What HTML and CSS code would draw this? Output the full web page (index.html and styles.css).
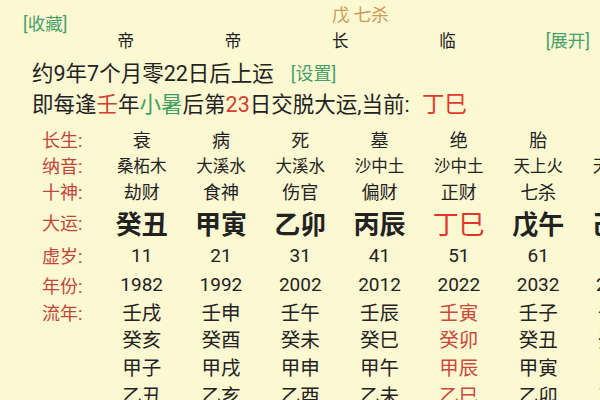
FILE: index.html
```html
<!DOCTYPE html>
<html lang="zh-CN">
<head>
<meta charset="utf-8">
<link rel="stylesheet" href="styles.css">
</head>
<body>
<div class="page">
  <div class="head">
    <span class="link fav">[收藏]</span>
    <div class="pillars">
      <div class="ss">戊 七杀</div>
      <div class="row4"><span>帝</span><span>帝</span><span>长</span><span>临</span></div>
    </div>
    <span class="link expand">[展开]</span>
  </div>
  <div class="line l1">约9年7个月零22日后上运<span class="link set">[设置]</span></div>
  <div class="line l2">即每逢<span class="red">壬</span>年<span class="green">小暑</span>后第<span class="red">23</span>日交脱大运,当前: <span class="cur">丁巳</span></div>

  <div class="table">
    <span class="lbl">长生:</span>
    <span class="v cs">衰</span><span class="v cs">病</span><span class="v cs">死</span><span class="v cs">墓</span><span class="v cs">绝</span><span class="v cs">胎</span><span class="v cs">养</span>

    <span class="lbl">纳音:</span>
    <span class="v ny">桑柘木</span><span class="v ny">大溪水</span><span class="v ny">大溪水</span><span class="v ny">沙中土</span><span class="v ny">沙中土</span><span class="v ny">天上火</span><span class="v ny">天上火</span>

    <span class="lbl">十神:</span>
    <span class="v ss2">劫财</span><span class="v ss2">食神</span><span class="v ss2">伤官</span><span class="v ss2">偏财</span><span class="v ss2">正财</span><span class="v ss2">七杀</span><span class="v ss2">正官</span>

    <span class="lbl">大运:</span>
    <span class="v dy">癸丑</span><span class="v dy">甲寅</span><span class="v dy">乙卯</span><span class="v dy">丙辰</span><span class="v dy now">丁巳</span><span class="v dy">戊午</span><span class="v dy">己未</span>

    <span class="lbl">虚岁:</span>
    <span class="v num">11</span><span class="v num">21</span><span class="v num">31</span><span class="v num">41</span><span class="v num">51</span><span class="v num">61</span><span class="v num">71</span>

    <span class="lbl">年份:</span>
    <span class="v num">1982</span><span class="v num">1992</span><span class="v num">2002</span><span class="v num">2012</span><span class="v num">2022</span><span class="v num">2032</span><span class="v num">2042</span>

    <span class="lbl">流年:</span>
    <span class="v ln">壬戌</span><span class="v ln">壬申</span><span class="v ln">壬午</span><span class="v ln">壬辰</span><span class="v ln hl">壬寅</span><span class="v ln">壬子</span><span class="v ln">壬戌</span>

    <span class="lbl"></span>
    <span class="v ln">癸亥</span><span class="v ln">癸酉</span><span class="v ln">癸未</span><span class="v ln">癸巳</span><span class="v ln hl">癸卯</span><span class="v ln">癸丑</span><span class="v ln">癸亥</span>

    <span class="lbl"></span>
    <span class="v ln">甲子</span><span class="v ln">甲戌</span><span class="v ln">甲申</span><span class="v ln">甲午</span><span class="v ln hl">甲辰</span><span class="v ln">甲寅</span><span class="v ln">甲子</span>

    <span class="lbl"></span>
    <span class="v ln">乙丑</span><span class="v ln">乙亥</span><span class="v ln">乙酉</span><span class="v ln">乙未</span><span class="v ln hl">乙巳</span><span class="v ln">乙卯</span><span class="v ln">乙丑</span>
  </div>
</div>
</body>
</html>
```

FILE: styles.css
```css
html, body {
  margin: 0;
  padding: 0;
  background: #fcf8d2;
  width: 600px;
  height: 400px;
  overflow: hidden;
}

.page {
  font-family: Roboto, "Noto Sans CJK SC", sans-serif;
  color: #222;
  width: 600px;
  height: 400px;
  overflow: hidden;
}

.link {
  color: #46a06b;
  font-size: 17.5px;
  line-height: 22px;
}

.head {
  display: grid;
  grid-template-columns: 72px 1fr auto;
  height: 56px;
}

.fav {
  padding-left: 23px;
  margin-top: 13px;
  align-self: start;
  white-space: nowrap;
}

.ss {
  color: #c99b58;
  font-size: 17.5px;
  line-height: 20px;
  padding-top: 5px;
  padding-left: 260px;
}

.row4 {
  display: grid;
  grid-template-columns: repeat(4, 107.3px);
  justify-items: center;
  margin-top: 6px;
  line-height: 22px;
  font-size: 16.5px;
}

.expand {
  align-self: end;
  margin-bottom: 4px;
  margin-right: 10px;
}

.line {
  font-size: 21.5px;
  line-height: 30px;
  padding-left: 32px;
  white-space: nowrap;
}

.l1 {
  margin-top: 3px;
}

.set {
  margin-left: 17px;
  font-size: 18px;
  vertical-align: 1px;
}

.red {
  color: #d2412f;
}

.green {
  color: #3f9d63;
}

.cur {
  color: #e0392c;
  font-size: 22.5px;
  margin-left: 7px;
}

.table {
  display: grid;
  grid-template-columns: 60px repeat(7, 79.3px);
  grid-template-rows: 26px 25px 28px 34px 32px 27px 27px 27px 28px 28px;
  align-items: center;
  justify-items: center;
  margin-top: 6px;
  padding-left: 42px;
  white-space: nowrap;
}

.lbl {
  justify-self: start;
  color: #bf463b;
  font-size: 18px;
}

.cs {
  font-size: 18px;
}

.ny {
  font-size: 16.5px;
}

.ss2 {
  font-size: 18px;
}

.dy {
  font-size: 26px;
  font-weight: bold;
}

.now {
  color: #e0352b;
  font-weight: normal;
}

.num {
  font-size: 19px;
}

.ln {
  font-size: 19.5px;
}

.hl {
  color: #c9493a;
}
```
